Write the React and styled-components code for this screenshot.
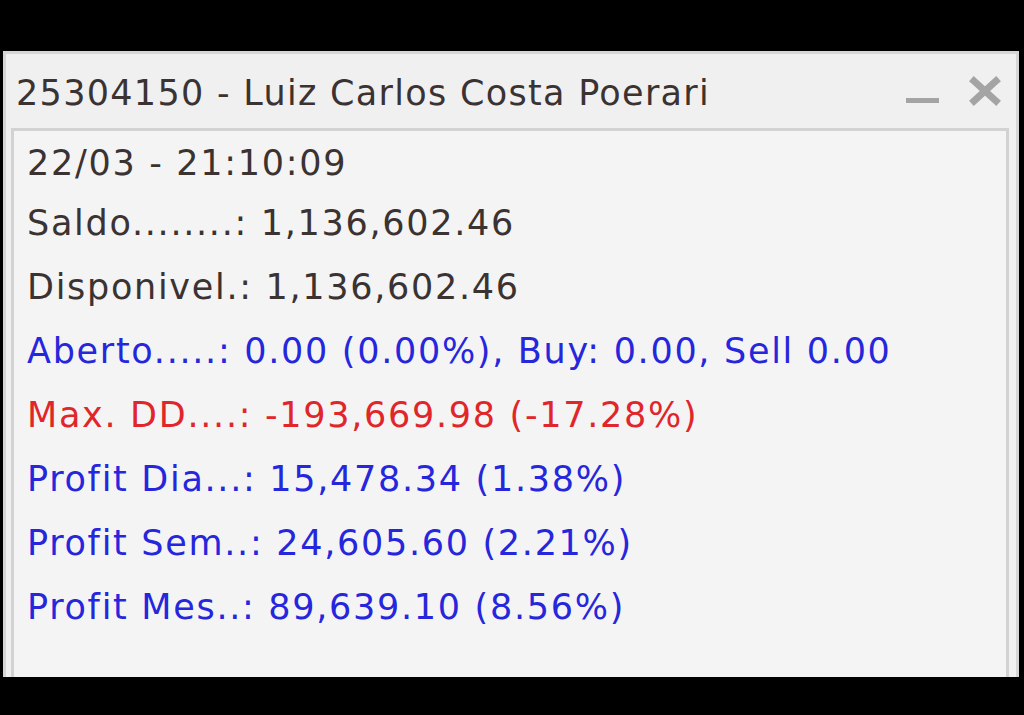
import styled, { createGlobalStyle } from "styled-components";

const GlobalStyle = createGlobalStyle`
  html, body {
    margin: 0;
    padding: 0;
    background: #000;
    height: 100%;
    overflow: hidden;
  }
`;

const rows = [
  { text: "22/03 - 21:10:09", color: "dark", first: true },
  { text: "Saldo........: 1,136,602.46", color: "dark" },
  { text: "Disponivel.: 1,136,602.46", color: "dark" },
  { text: "Aberto.....: 0.00 (0.00%), Buy: 0.00, Sell 0.00", color: "blue" },
  { text: "Max. DD....: -193,669.98 (-17.28%)", color: "red" },
  { text: "Profit Dia...: 15,478.34 (1.38%)", color: "blue" },
  { text: "Profit Sem..: 24,605.60 (2.21%)", color: "blue" },
  { text: "Profit Mes..: 89,639.10 (8.56%)", color: "blue" },
];

const colors = {
  dark: "#3b3232",
  blue: "#2626dc",
  red: "#e0262a",
};

const App = () => {
  return (
    <>
      <GlobalStyle />
      <Screen>
        <Window>
          <TitleBar>
            <Title>25304150 - Luiz Carlos Costa Poerari</Title>
            <Controls>
              <Minimize />
              <svg width="32" height="30" viewBox="0 0 32 30">
                <path
                  d="M5 5 L27 25 M27 5 L5 25"
                  stroke="#a4a4a4"
                  strokeWidth="7"
                  strokeLinecap="square"
                />
              </svg>
            </Controls>
          </TitleBar>
          <Panel>
            {rows.map(row => (
              <Row key={row.text} $color={colors[row.color]} $first={row.first}>
                {row.text}
              </Row>
            ))}
          </Panel>
        </Window>
      </Screen>
    </>
  );
};

const Screen = styled.div`
  width: 1024px;
  height: 715px;
  background: #000;
  padding-top: 51px;
  box-sizing: border-box;
  overflow: hidden;
`;

const Window = styled.div`
  margin-left: 3px;
  width: 1016px;
  height: 626px;
  box-sizing: border-box;
  background: #f0f0f0;
  border: 3px solid #d6d6d6;
  border-bottom: none;
  display: flex;
  flex-direction: column;
  padding: 0 7px 0 5px;
`;

const TitleBar = styled.div`
  height: 74px;
  display: flex;
  align-items: center;
  justify-content: space-between;
  padding: 0 0 0 5px;
`;

const Title = styled.div`
  font-family: "DejaVu Sans", Verdana, sans-serif;
  font-size: 35px;
  letter-spacing: 1.3px;
  color: #3b3232;
  white-space: nowrap;
  margin-top: 4px;
`;

const Controls = styled.div`
  display: flex;
  align-items: center;
  gap: 30px;
  padding-right: 8px;

  svg {
    display: block;
  }
`;

const Minimize = styled.div`
  width: 33px;
  height: 5px;
  background: #a4a4a4;
  margin-top: 18px;
`;

const Panel = styled.div`
  flex: 1;
  background: #f4f4f4;
  border: 3px solid #d2d2d2;
  border-bottom: none;
  padding: 4px 0 0 13px;
`;

const Row = styled.div`
  font-family: "DejaVu Sans", Verdana, sans-serif;
  font-size: 35px;
  letter-spacing: 1.7px;
  color: ${p => p.$color};
  white-space: nowrap;
  height: ${p => (p.$first ? "56px" : "64px")};
  line-height: ${p => (p.$first ? "56px" : "64px")};
`;

export default App;
